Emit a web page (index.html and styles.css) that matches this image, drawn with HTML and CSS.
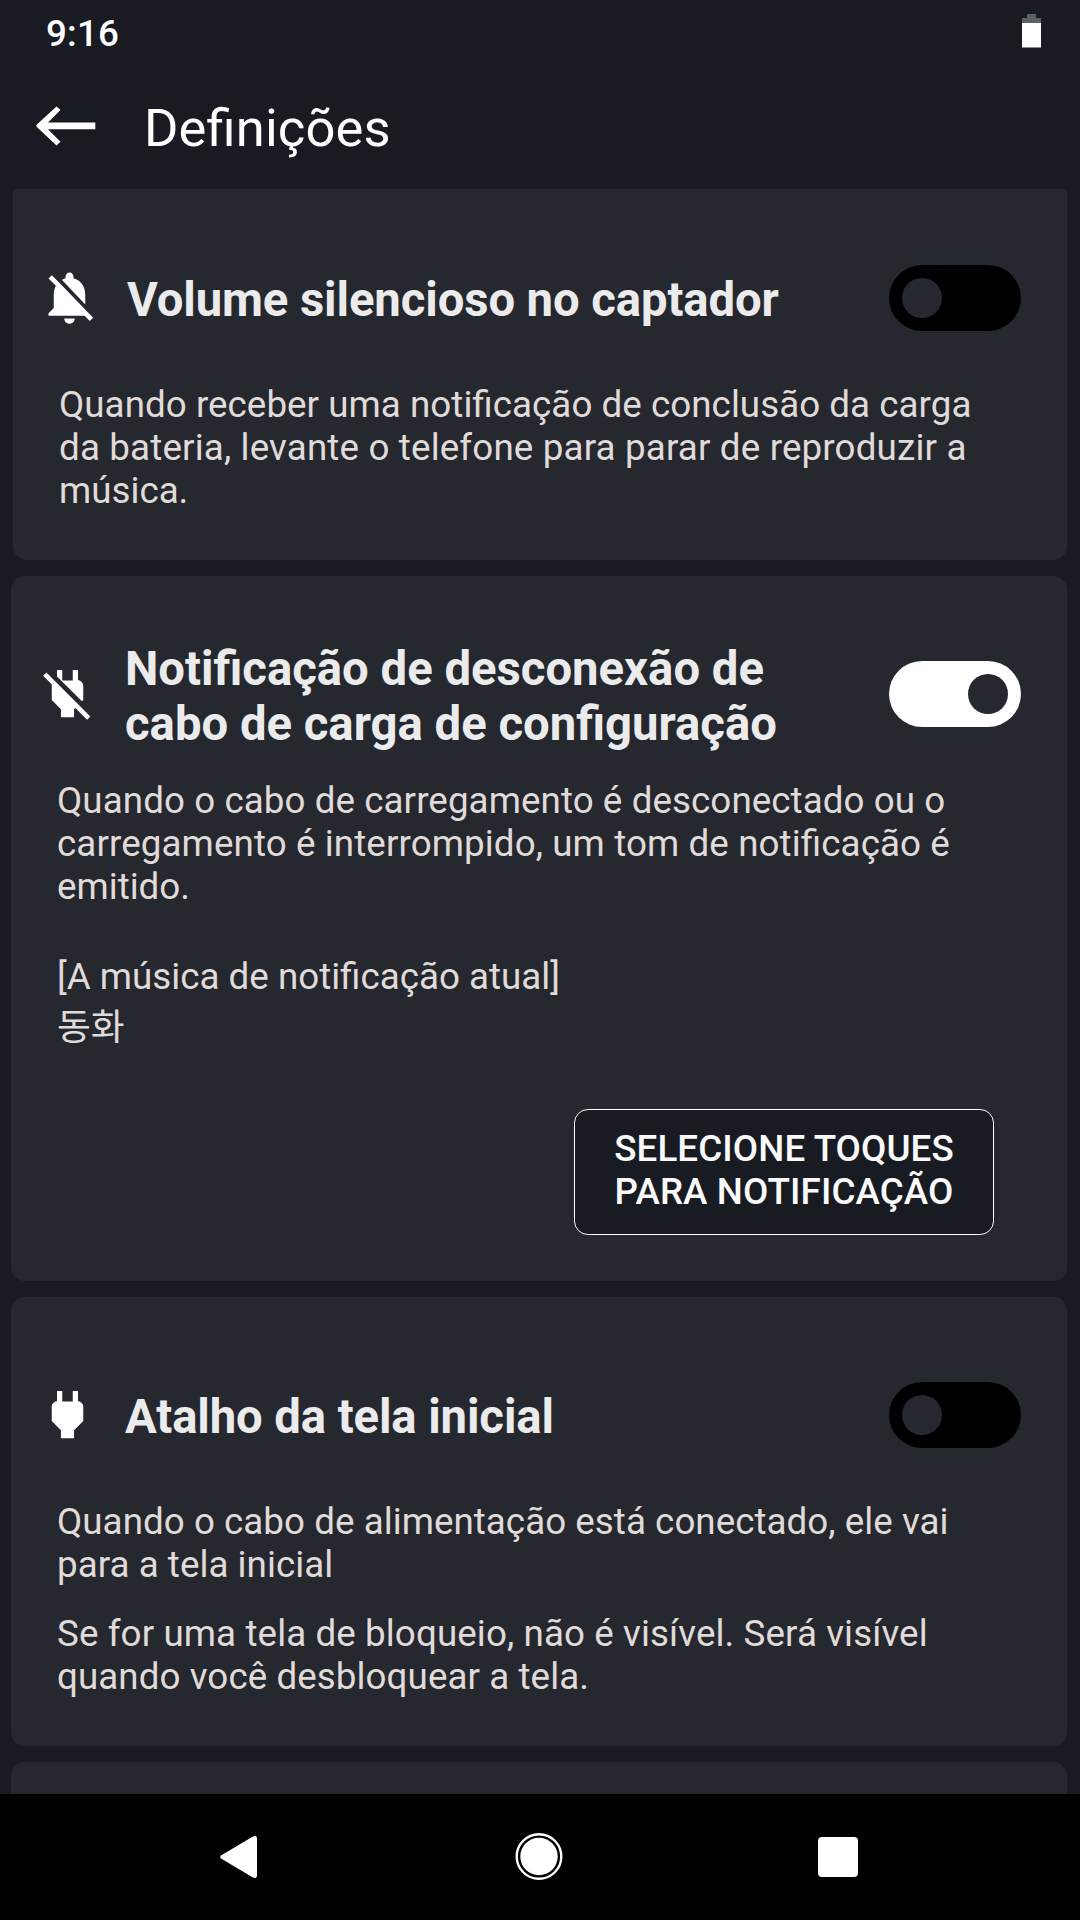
FILE: index.html
```html
<!DOCTYPE html>
<html lang="pt">
<head>
<meta charset="utf-8">
<title>Definições</title>
<link rel="stylesheet" href="styles.css">
</head>
<body>
<div class="screen">
  <div class="status-bar">
    <span class="clock">9:16</span>
    <svg class="battery" viewBox="0 0 19 34"><path fill="#5d6066" d="M5 0h9v4h5v6H0V4h5z"/><path fill="#fff" d="M0 9h19v24.500H0z"/></svg>
  </div>
  <header class="app-bar">
    <svg class="back" viewBox="0 0 60 40"><path fill="#fff" d="M.6 18.800 20.500 .4l4 3.600L12 16.400h47.300v6.800H12l12.500 12.600-4 3.600L.6 20.800q-.8-1 0-2z"/></svg>
    <h1 class="title">Definições</h1>
  </header>
  <main class="list">
    <section class="card card-clipped">
      <div class="row">
        <svg class="icon" viewBox="0 0 24 24"><path d="M20 18.690L7.840 6.140 5.270 3.490 4 4.760l2.800 2.800v.01c-.52.99-.8 2.160-.8 3.420v5l-2 2v1h13.730l2 2L21 19.720l-1-1.030zM12 22c1.110 0 2-.89 2-2h-4c0 1.110.89 2 2 2zm6-7.320V11c0-3.080-1.640-5.640-4.500-6.320V4c0-.83-.67-1.500-1.500-1.500s-1.500.67-1.500 1.500v.68c-.15.03-.29.08-.42.12-.1.03-.2.07-.3.110h-.01c-.01 0-.01 0-.02.01-.23.09-.46.2-.68.310 0 0-.01 0-.01.01L18 14.680z"/></svg>
        <h2 class="heading">Volume silencioso no captador</h2>
        <span class="toggle"><span class="knob"></span></span>
      </div>
      <p class="body"><span class="line track-1">Quando receber uma notificação de conclusão da carga</span><span class="line track-4">da bateria, levante o telefone para parar de reproduzir a</span><span class="line">música.</span></p>
    </section>
    <section class="card card-cable">
      <div class="row">
        <svg class="icon" viewBox="0 0 24 24"><path d="M18 14.490V9c0-1-1.010-2.010-2-2V3h-2v4h-4V3H8v2.480l9.510 9.500.49-.49zm-1.760 1.770L7.200 7.200l-.01.01L3.980 4 2.710 5.250l3.360 3.360C6.040 8.740 6 8.870 6 9v5.480L9.500 18v3h5v-3l.48-.48L19.450 22l1.260-1.280-4.470-4.460z"/></svg>
        <h2 class="heading">Notificação de desconexão de<br>cabo de carga de configuração</h2>
        <span class="toggle on"><span class="knob"></span></span>
      </div>
      <p class="body"><span class="line track-2">Quando o cabo de carregamento é desconectado ou o</span><span class="line track-3">carregamento é interrompido, um tom de notificação é</span><span class="line">emitido.</span></p>
      <p class="body current">[A música de notificação atual]</p>
      <p class="body song" lang="ko">동화</p>
      <button class="select">SELECIONE TOQUES<br>PARA NOTIFICAÇÃO</button>
    </section>
    <section class="card card-home">
      <div class="row">
        <svg class="icon" viewBox="0 0 24 24"><path d="M16.010 7L16 3h-2v4h-4V3H8v4h-.01C7 6.990 6 7.990 6 8.990v5.490L9.500 18v3h5v-3l3.500-3.510v-5.500c0-1-1-2-1.990-1.990z"/></svg>
        <h2 class="heading">Atalho da tela inicial</h2>
        <span class="toggle"><span class="knob"></span></span>
      </div>
      <p class="body"><span class="line track-1">Quando o cabo de alimentação está conectado, ele vai</span><span class="line track-1">para a tela inicial</span></p>
      <p class="body note"><span class="line track-3">Se for uma tela de bloqueio, não é visível. Será visível</span><span class="line track-2">quando você desbloquear a tela.</span></p>
    </section>
    <section class="card card-next"></section>
  </main>
  <nav class="nav-bar">
    <svg class="nav-back" viewBox="0 0 37 42"><path fill="#fff" d="M32.500.8Q37-1.400 37 2.500v37q0 3.900-4.500 1.700L1.400 22.800q-2.400-1.800 0-3.600z"/></svg>
    <svg class="nav-home" viewBox="0 0 48 48"><circle cx="24" cy="23.500" r="22.300" fill="none" stroke="#fff" stroke-width="2.400"/><circle cx="24" cy="23.500" r="18.700" fill="#fff"/></svg>
    <span class="nav-recent"></span>
  </nav>
</div>
</body>
</html>
```
FILE: styles.css
```css
* { box-sizing: border-box; margin: 0; padding: 0; }

body {
  width: 1080px;
  height: 1920px;
  overflow: hidden;
  background: #181b22;
  font-family: Roboto, "Noto Sans CJK KR", sans-serif;
}

.screen { display: flex; flex-direction: column; width: 1080px; height: 1920px; }

.status-bar {
  display: flex;
  justify-content: space-between;
  align-items: flex-start;
  height: 63px;
  padding: 12px 39px 0 46px;
}
.clock {
  margin-top: 1px;
  font-size: 36.75px;
  line-height: 42px;
  font-weight: 500;
  letter-spacing: 0.2px;
  color: #fff;
}
.battery { width: 19px; height: 34px; margin-top: 2px; }

.app-bar {
  display: flex;
  align-items: flex-start;
  height: 126px;
  padding: 34px 36px 0;
}
.back { width: 60px; height: 40px; margin-top: 9px; }
.title {
  margin-left: 48px;
  font-size: 52.5px;
  line-height: 62px;
  font-weight: 400;
  letter-spacing: 0.13px;
  font-feature-settings: "liga" 1;
  color: #fff;
}

.list {
  display: flex;
  flex-direction: column;
  gap: 16px;
  height: 1605px;
  padding: 0 13px 0 11px;
  overflow: hidden;
}
.card {
  flex: none;
  display: flex;
  flex-direction: column;
  padding: 66px 46px 0;
  border-radius: 14px;
  background: #25282f;
}
.card-clipped {
  height: 371px;
  margin-left: 2px;
  padding-top: 57px;
  border-radius: 2px 2px 14px 14px;
}
.card-cable { height: 705px; }
.card-home { height: 449px; }
.card-next { height: 80px; }

.row {
  display: flex;
  align-items: center;
  height: 104px;
  margin-left: -21px;
}
.icon {
  flex: none;
  width: 63px;
  height: 63px;
  margin-bottom: 1px;
  fill: #fff;
}
.heading {
  flex: 1;
  margin-left: 26px;
  padding-top: 5px;
  font-size: 47.25px;
  line-height: 55px;
  font-weight: 700;
  letter-spacing: -0.1px;
  color: #ebebeb;
  white-space: nowrap;
}
.card-cable .heading { padding-top: 6px; letter-spacing: normal; }
.toggle {
  display: flex;
  align-items: center;
  flex: none;
  width: 132px;
  height: 66px;
  padding: 0 13px;
  border-radius: 33px;
  background: #000;
}
.toggle.on { justify-content: flex-end; background: #fff; }
.knob { width: 40px; height: 40px; border-radius: 50%; background: #25282f; }

.body {
  margin-top: 33px;
  font-size: 36.75px;
  line-height: 43px;
  color: #e0dbd9;
  font-feature-settings: "liga" 1;
  white-space: nowrap;
}
.line { display: block; }
.track-1 { letter-spacing: 0.04px; }
.track-2 { letter-spacing: 0.075px; }
.track-3 { letter-spacing: 0.1px; }
.track-4 { letter-spacing: 0.155px; }

.card-cable .current { margin-top: 47px; }
.card-cable .song { margin-top: 8px; }
.card-home .note { margin-top: 26px; }

.select {
  align-self: flex-end;
  width: 420px;
  height: 126px;
  margin: 60px 27px 0 0;
  padding-bottom: 4px;
  border: 1px solid #fff;
  border-radius: 14px;
  background: #181b22;
  font: 500 36.75px/43px Roboto, sans-serif;
  letter-spacing: 0.1px;
  color: #fafafa;
}

.nav-bar {
  display: flex;
  align-items: center;
  justify-content: space-between;
  height: 126px;
  padding: 0 222px 0 220px;
  background: #000;
}
.nav-back { width: 37px; height: 42px; }
.nav-home { width: 48px; height: 48px; margin-left: 3px; }
.nav-recent { width: 40px; height: 40px; border-radius: 4px; background: #fff; }
```
